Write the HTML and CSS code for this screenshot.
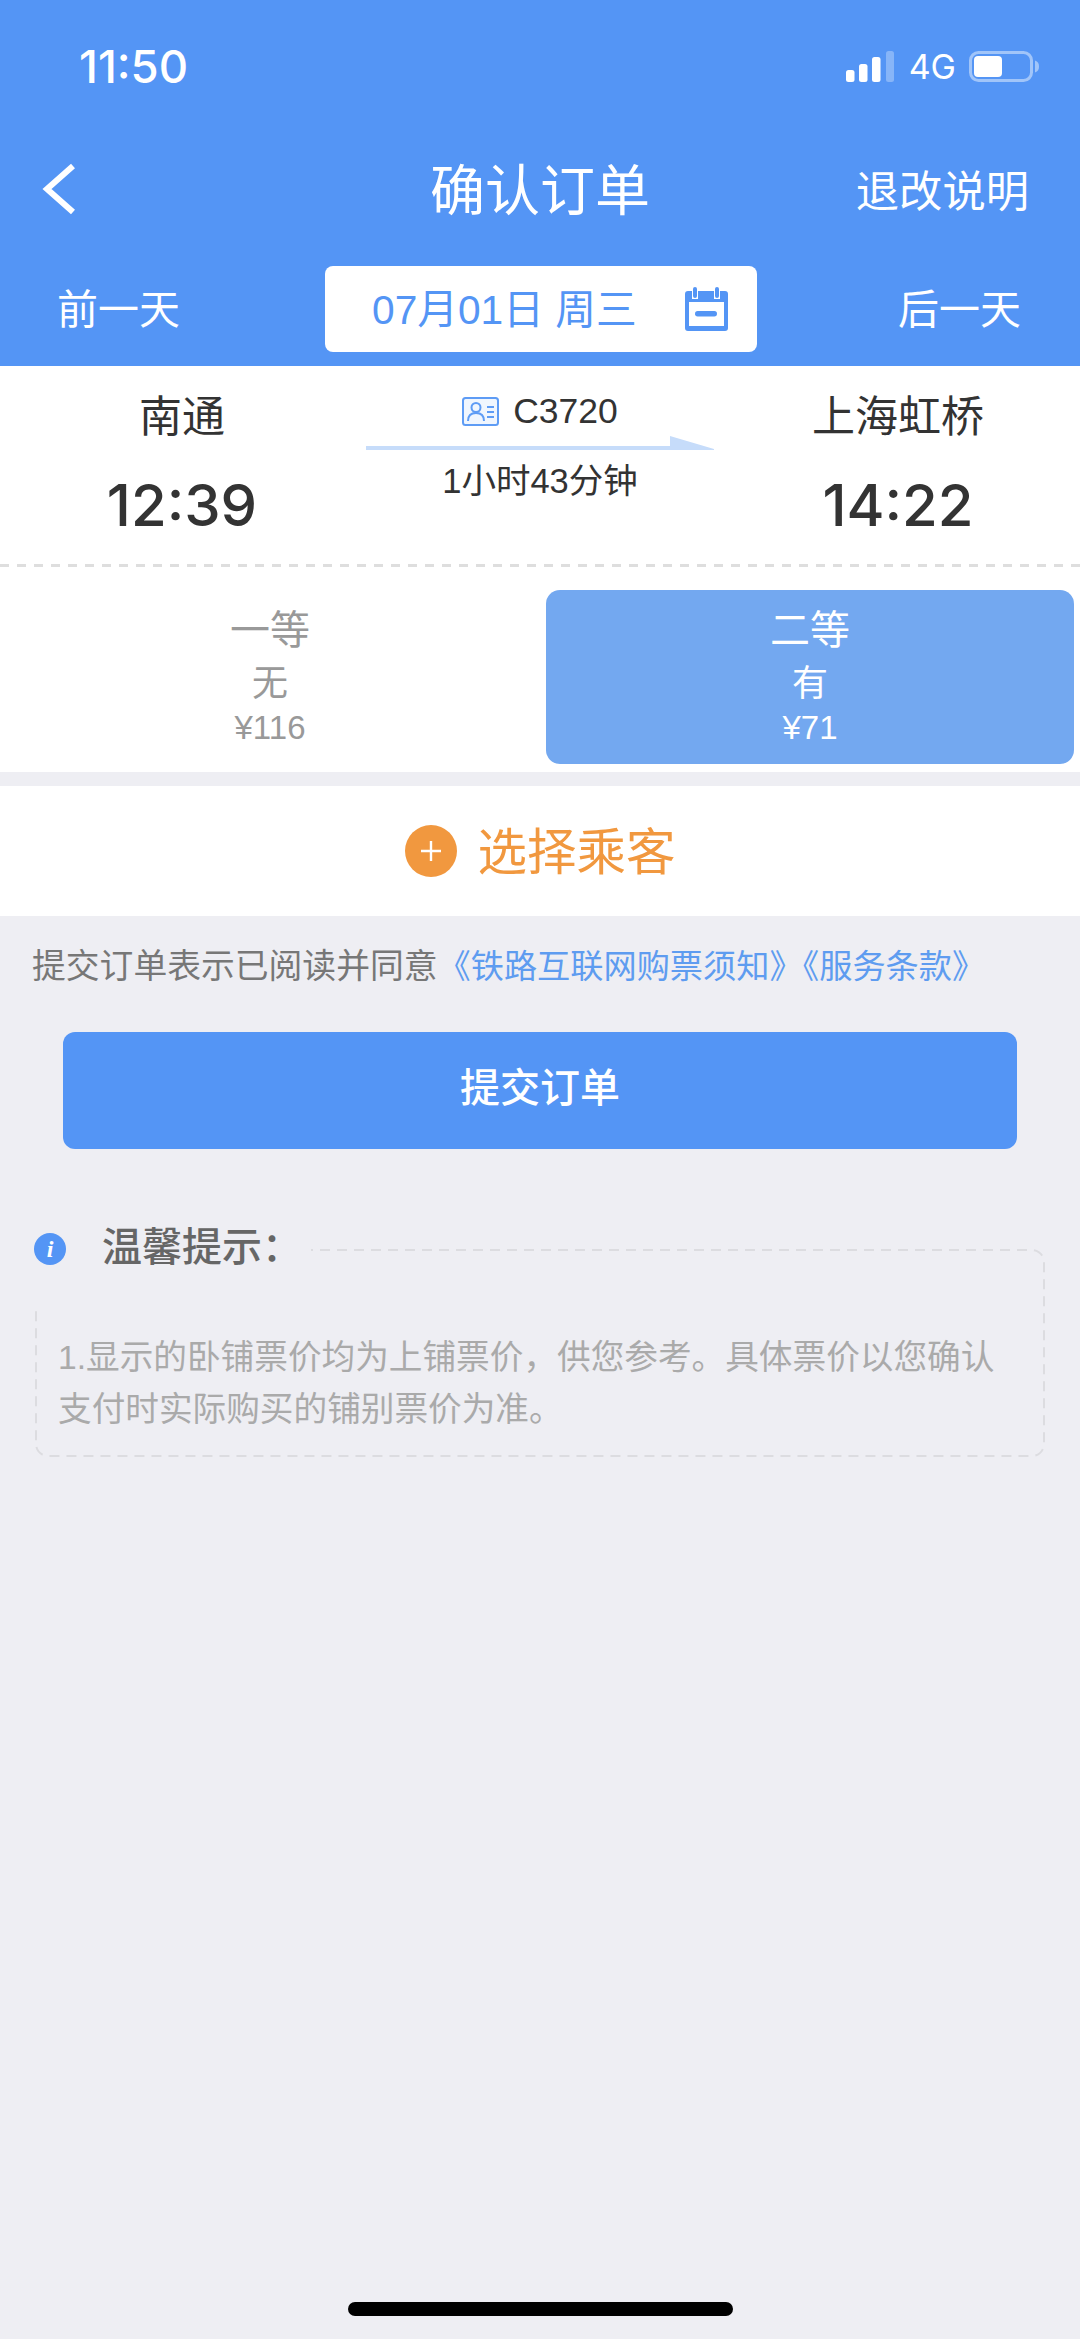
FILE: index.html
```html
<!DOCTYPE html>
<html lang="zh-CN">
<head>
    <meta charset="UTF-8">
    <title>确认订单</title>
    <link rel="stylesheet" href="styles.css">
</head>
<body>
    <div class="phone">
        <div class="header">
            <div class="status-bar">
                <span class="clock">11:50</span>
                <div class="status-icons">
                    <svg class="signal" width="48" height="31" viewBox="0 0 48 31">
                        <rect x="0" y="19" width="8.5" height="12" rx="2.5" fill="#fff"/>
                        <rect x="13" y="13" width="8.5" height="18" rx="2.5" fill="#fff"/>
                        <rect x="26" y="6" width="8.5" height="25" rx="2.5" fill="#fff"/>
                        <rect x="40" y="0" width="8" height="31" rx="2.5" fill="#fff" fill-opacity=".3"/>
                    </svg>
                    <span class="net">4G</span>
                    <svg class="battery" width="70" height="31" viewBox="0 0 70 31">
                        <rect x="1.5" y="1.5" width="61" height="28" rx="8" fill="none" stroke="#fff" stroke-opacity=".45" stroke-width="3"/>
                        <rect x="5" y="5" width="28" height="21" rx="4" fill="#fff"/>
                        <path d="M66 9.500c3 1 4 3 4 6s-1 5-4 6z" fill="#fff" fill-opacity=".45"/>
                    </svg>
                </div>
            </div>
            <div class="nav-bar">
                <svg class="back" width="36" height="52" viewBox="0 0 36 52">
                    <path d="M32 3 6 26l26 23" fill="none" stroke="#fff" stroke-width="6"/>
                </svg>
                <span class="nav-title">确认订单</span>
                <span class="nav-link">退改说明</span>
            </div>
            <div class="date-bar">
                <span class="day-link">前一天</span>
                <div class="date-pill">
                    <span class="date-text">07月01日 周三</span>
                    <svg width="43" height="44" viewBox="0 0 43 44">
                        <path d="M3 4h4v8h6V4h16v8h6V4h5a3 3 0 0 1 3 3v34a3 3 0 0 1-3 3H3a3 3 0 0 1-3-3V7a3 3 0 0 1 3-3z" fill="#5495f5"/>
                        <rect x="8" y="0" width="4" height="11" rx="2" fill="#5495f5"/>
                        <rect x="30" y="0" width="4" height="11" rx="2" fill="#5495f5"/>
                        <rect x="4" y="15" width="35" height="24" fill="#fff"/>
                        <rect x="10" y="24" width="22" height="5.500" rx="2.700" fill="#5495f5"/>
                    </svg>
                </div>
                <span class="day-link">后一天</span>
            </div>
        </div>

        <div class="train-info">
            <div class="station">
                <div class="station-name">南通</div>
                <div class="station-time">12:39</div>
            </div>
            <div class="train-middle">
                <div class="train-no">
                    <svg width="37" height="29" viewBox="0 0 37 29">
                        <rect x="1" y="1" width="35" height="27" rx="2.500" fill="#f0f6fe" stroke="#5e9cf5" stroke-width="2"/>
                        <circle cx="14" cy="10.500" r="4.500" fill="none" stroke="#5e9cf5" stroke-width="2"/>
                        <path d="M6 24c0-5 3-8 8-8s8 3 8 8" fill="none" stroke="#5e9cf5" stroke-width="2"/>
                        <path d="M25 10h7M25 15h7M25 20h7" stroke="#5e9cf5" stroke-width="2"/>
                    </svg>
                    <span>C3720</span>
                </div>
                <svg class="arrow" width="348" height="14" viewBox="0 0 348 14">
                    <path d="M0 10h304V0l44 13v1H0z" fill="#c6dcfa"/>
                </svg>
                <div class="duration">1小时43分钟</div>
            </div>
            <div class="station">
                <div class="station-name">上海虹桥</div>
                <div class="station-time">14:22</div>
            </div>
        </div>

        <div class="seats">
            <div class="seat">
                <div class="seat-name">一等</div>
                <div class="seat-left">无</div>
                <div class="seat-price">¥116</div>
            </div>
            <div class="seat seat-active">
                <div class="seat-name">二等</div>
                <div class="seat-left">有</div>
                <div class="seat-price">¥71</div>
            </div>
        </div>

        <div class="passenger">
            <span class="plus-circle">
                <svg width="24" height="24" viewBox="0 0 24 24">
                    <path d="M12 2v20M2 12h20" stroke="#fff" stroke-width="2.400"/>
                </svg>
            </span>
            <span class="passenger-text">选择乘客</span>
        </div>

        <p class="agree">提交订单表示已阅读并同意<a class="agree-link">《铁路互联网购票须知》《服务条款》</a></p>

        <button class="submit">提交订单</button>

        <div class="tips">
            <svg class="tips-outline" width="1010" height="208" viewBox="0 0 1010 208">
                <rect x="1" y="1" width="1008" height="206" rx="12" fill="none" stroke="#dcdce0" stroke-width="2" stroke-dasharray="10 7"/>
            </svg>
            <div class="tips-box">
                <p>1.显示的卧铺票价均为上铺票价，供您参考。具体票价以您确认支付时实际购买的铺别票价为准。</p>
            </div>
            <div class="tips-head">
                <span class="info-icon">i</span>
                <span class="tips-title">温馨提示：</span>
            </div>
        </div>

        <div class="home-bar"></div>
    </div>
</body>
</html>
```

FILE: styles.css
```css
* {
    box-sizing: border-box;
}
body {
    margin: 0;
    background-color: #eeeef3;
    font-family: 'Liberation Sans', 'Noto Sans CJK SC', sans-serif;
}
.phone {
    position: relative;
    width: 1080px;
    height: 2339px;
    overflow: hidden;
}
.header {
    height: 366px;
    background-color: #5495f5;
    color: #fff;
}
.status-bar {
    display: flex;
    justify-content: space-between;
    align-items: center;
    height: 132px;
    padding: 0 41px 0 79px;
}
.clock {
    font-family: 'Inter', sans-serif;
    font-size: 45.500px;
    font-weight: 500;
}
.status-icons {
    display: flex;
    align-items: center;
}
.signal {
    margin-right: 15px;
}
.net {
    font-family: 'Inter', sans-serif;
    font-size: 34px;
    margin-right: 13px;
}
.nav-bar {
    display: flex;
    align-items: center;
    justify-content: space-between;
    position: relative;
    height: 112px;
    padding: 0 51px 0 41px;
}
.back {
    margin-top: 2px;
}
.nav-title {
    position: absolute;
    left: 0;
    right: 0;
    text-align: center;
    font-size: 55px;
    margin-top: -5px;
}
.nav-link {
    font-size: 43.300px;
    margin-bottom: 1px;
}
.date-bar {
    display: flex;
    align-items: center;
    justify-content: space-between;
    height: 122px;
    padding: 8px 59px 0 57px;
}
.day-link {
    font-size: 41px;
    margin-bottom: 7px;
}
.date-pill {
    display: flex;
    align-items: center;
    justify-content: space-between;
    width: 432px;
    height: 86px;
    margin-left: 4px;
    padding: 0 29px 0 47px;
    border-radius: 8px;
    background-color: #fff;
    color: #5495f5;
    font-size: 40.700px;
}
.date-text {
    margin-bottom: 5px;
}
.train-info {
    display: flex;
    justify-content: space-between;
    height: 201px;
    padding: 0 87px;
    background: repeating-linear-gradient(to right, #dedede 0 9px, transparent 9px 17px) left bottom / 100% 3px no-repeat, #fff;
}
.station {
    display: flex;
    flex-direction: column;
    align-items: center;
    width: 190px;
    color: #333;
}
.station-name {
    margin-top: 22px;
    font-size: 43px;
    line-height: 58px;
    white-space: nowrap;
}
.station-time {
    margin-top: 20px;
    font-size: 58px;
    font-weight: 500;
    line-height: 78px;
    font-family: 'Inter', sans-serif;
}
.train-middle {
    display: flex;
    flex-direction: column;
    align-items: center;
    color: #333;
}
.train-no {
    display: flex;
    align-items: center;
    gap: 14px;
    margin-top: 24px;
    font-size: 35.500px;
    line-height: 42px;
}
.arrow {
    display: block;
    margin-top: 4px;
}
.duration {
    margin-top: 8px;
    font-size: 34.500px;
    line-height: 46px;
}
.seats {
    display: flex;
    height: 205px;
    padding: 23px 6px 8px 0;
    background-color: #fff;
}
.seat {
    flex: 1;
    display: flex;
    flex-direction: column;
    align-items: center;
    color: #999;
    border-radius: 14px;
}
.seat-active {
    flex: none;
    width: 528px;
    margin-left: 6px;
    background-color: #73a8f0;
    color: #fff;
}
.seat-name {
    margin-top: 14px;
    font-size: 40px;
    line-height: 52px;
}
.seat-left {
    margin-top: 6px;
    font-size: 36px;
    line-height: 44px;
}
.seat-price {
    margin-top: 0;
    font-size: 33px;
    font-weight: 500;
    line-height: 44px;
}
.passenger {
    display: flex;
    align-items: center;
    justify-content: center;
    gap: 21px;
    height: 130px;
    margin-top: 14px;
    background-color: #fff;
    color: #f1983f;
    font-size: 49.500px;
}
.passenger-text {
    margin-bottom: 5px;
}
.plus-circle {
    display: flex;
    align-items: center;
    justify-content: center;
    width: 52px;
    height: 52px;
    border-radius: 50%;
    background-color: #f1983f;
}
.agree {
    margin: 28px 0 0 32px;
    font-size: 33.800px;
    line-height: 44px;
    color: #777;
    white-space: nowrap;
}
.agree-link {
    font-size: 33.200px;
    color: #5e9cf0;
}
.submit {
    display: block;
    width: 954px;
    height: 117px;
    margin: 43px 0 0 63px;
    padding: 0 0 11px;
    border: none;
    border-radius: 12px;
    background-color: #5495f5;
    color: #fff;
    font-family: inherit;
    font-size: 40px;
    font-weight: 500;
}
.tips {
    position: relative;
    margin: 100px 0 0 35px;
    width: 1010px;
    height: 208px;
}
.tips-outline {
    position: absolute;
    left: 0;
    top: 0;
}
.tips-box {
    height: 208px;
    padding: 83px 30px 0 23px;
    color: #aaa;
    font-size: 33.650px;
    line-height: 52px;
}
.tips-box p {
    margin: 0;
}
.tips-head {
    position: absolute;
    left: -1px;
    top: -30px;
    display: flex;
    align-items: flex-start;
    width: 277px;
    height: 92px;
    background-color: #eeeef3;
}
.info-icon {
    display: flex;
    align-items: center;
    justify-content: center;
    width: 32px;
    height: 32px;
    margin-top: 14px;
    border-radius: 50%;
    background-color: #5495f5;
    color: #fff;
    font-family: 'Liberation Serif', serif;
    font-size: 24px;
    font-weight: 700;
    font-style: italic;
}
.tips-title {
    margin-left: 36px;
    font-size: 40px;
    line-height: 57px;
    font-weight: 500;
    color: #666;
}
.home-bar {
    position: absolute;
    left: 348px;
    bottom: 23px;
    width: 385px;
    height: 14px;
    border-radius: 7px;
    background-color: #000;
}
```
